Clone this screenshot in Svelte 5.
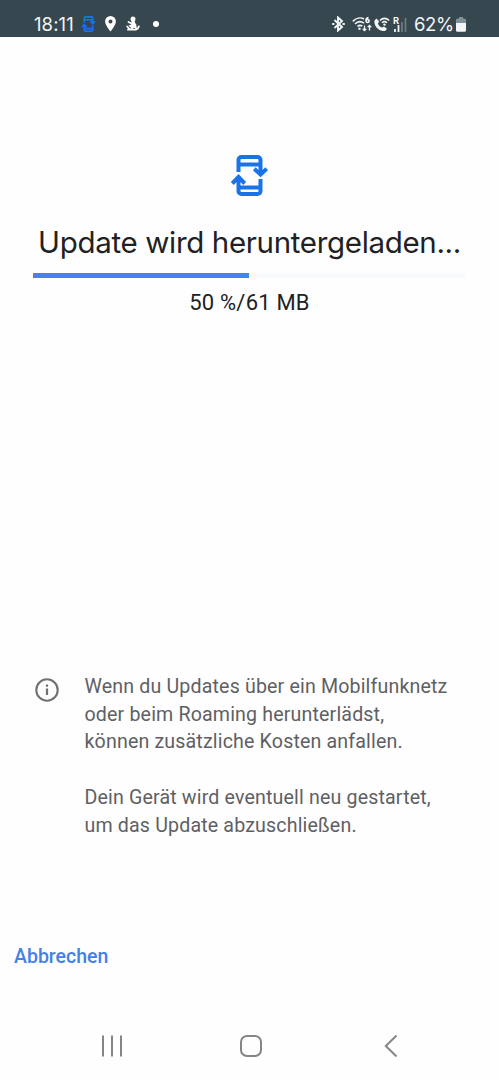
<script>
  const progress = 50;
</script>

{#snippet phoneUpdate()}
  <path d="M238.500 172V160a3 3 0 0 1 3-3h16a3 3 0 0 1 3 3v14M239 164.500h21M254.300 168.800l6.200 5.800 6.200-5.800M260.500 179v12a3 3 0 0 1-3 3h-16a3 3 0 0 1-3-3v-14M239 187.500h21M232.300 183.500l6.200-6.500 6.200 6.500" />
{/snippet}

<div class="screen">
  <header class="status">
    <div class="left">
      <span class="clock">18:11</span>
      <svg class="mini" viewBox="230 154 39 43" width="15" height="18">{@render phoneUpdate()}</svg>
      <svg class="pin" viewBox="0 0 11 16" width="11" height="16"><path fill="#fff" fill-rule="evenodd" d="M5.500 0A5.400 5.400 0 0 0 .1 5.400C.1 9 5.500 15.500 5.500 15.500S10.900 9 10.900 5.400A5.400 5.400 0 0 0 5.500 0Zm0 3.500a2 2 0 1 1 0 4 2 2 0 0 1 0-4Z" /></svg>
      <svg class="figure" viewBox="0 0 14 16" width="14" height="16">
        <circle cx="7" cy="2.900" r="2.500" fill="#fff" />
        <path d="M5.500 5 8.500 4.500l1.300 5L8.500 12 4.500 11.500 2.500 9.500l2.700-1Z" fill="#fff" />
        <path d="M2.500 6 5 7.200M1.200 10.500l2 2.300M2 13.700h7.500M9.300 8.500l.5 3.300M10 13.500c1.500-.3 2.500-1.500 2.800-3M8 10.500l-2.500 2" fill="none" stroke="#fff" stroke-width="1.800" stroke-linecap="round" />
      </svg>
      <i class="dot"></i>
    </div>
    <div class="right">
      <svg class="bt" viewBox="0 0 13 16" width="13" height="16" fill="none" stroke="#f3f6f7" stroke-width="1.900"><path d="m2.500 4 7.500 7-4 3.500v-13L10 5l-7.500 7M.2 8h2.200M10.500 8h2.300" /></svg>
      <svg class="wifi" viewBox="0 0 20 17" width="20" height="17" fill="none" stroke="#f3f6f7" stroke-width="1.600">
        <path d="M.8 5.400C4 2 8.500 1 12 3M3 8c2.500-2.500 6-3 9-.8M5.500 10.500c1.500-1.300 3.300-1.300 4.800-.3" />
        <circle cx="7.500" cy="12.700" r="1.200" fill="#f3f6f7" stroke="none" />
        <path d="M16.500 1.600c-1.700.2-2.500 1.500-2.400 3.100" /><circle cx="15.600" cy="5" r="1.500" />
        <path stroke-width="1.300" d="M12.500 9.500v5M10.700 12.800l1.800 1.800 1.800-1.800M17.500 14.500v-5M15.700 11.200l1.800-1.800 1.800 1.800" />
      </svg>
      <svg class="call" viewBox="0 0 16 15" width="16" height="15">
        <path fill="#f3f6f7" d="M.5 3.500 2.500 1.500l2.700 3-1.300 2c.8 2.200 2.200 3.500 4.300 4.100l1.800-1.200 3 2.300-1.600 2C6 15.500-.5 9.500.5 3.500Z" />
        <path d="M5.800 3.500c2.800-2.600 6.500-2.600 9.400 0M8 5.700c1.700-1.500 3.300-1.500 5 0" fill="none" stroke="#f3f6f7" stroke-width="1.500" />
        <circle cx="10.500" cy="7.600" r="1.200" fill="#f3f6f7" />
      </svg>
      <div class="signal">
        <span>R</span>
        <svg viewBox="0 0 14 15" width="14" height="15"><path d="M2 12v3M5.500 8v7" stroke="#f3f6f7" stroke-width="1.800" /><path d="M9 5v10M12.500 1v14" stroke="#718087" stroke-width="1.600" /></svg>
      </div>
      <span class="percent">62%</span>
      <svg class="battery" viewBox="0 0 10 15" width="10" height="15"><path d="M3 0h4v1.500h1.500A1.500 1.500 0 0 1 10 3v3H0V3a1.500 1.500 0 0 1 1.500-1.500H3Z" fill="#829097" /><path d="M0 6h10v7.300a1.500 1.500 0 0 1-1.500 1.500h-7A1.500 1.500 0 0 1 0 13.300Z" fill="#f3f6f7" /></svg>
    </div>
  </header>

  <main>
    <svg class="hero" viewBox="230 154 39 43" width="39" height="43">{@render phoneUpdate()}</svg>
    <h1>Update wird heruntergeladen...</h1>
    <div class="track"><div class="fill" style="width: {progress}%"></div></div>
    <p class="amount">{progress} %/61 MB</p>
  </main>

  <section class="info">
    <svg viewBox="0 0 24 24" width="24" height="24"><circle cx="12" cy="12" r="10.700" fill="none" stroke="#707174" stroke-width="2.100" /><path d="M12 10.500v6.500M12 6.600v2.200" stroke="#707174" stroke-width="2.200" /></svg>
    <div class="notes">
      <p>Wenn du Updates über ein Mobilfunknetz<br />oder beim Roaming herunterlädst,<br />können zusätzliche Kosten anfallen.</p>
      <p>Dein Gerät wird eventuell neu gestartet,<br />um das Update abzuschließen.</p>
    </div>
  </section>

  <button class="cancel">Abbrechen</button>

  <nav>
    <svg viewBox="0 0 22 22" width="22" height="22"><path d="M2 .5v21M11 .5v21M20 .5v21" /></svg>
    <svg viewBox="0 0 22 22" width="22" height="22"><rect x="1" y="1" width="20" height="20" rx="6" /></svg>
    <svg viewBox="0 0 14 22" width="14" height="22"><path d="M12.500.5 1.800 11l10.700 10.500" /></svg>
  </nav>
</div>

<style>
  :global(body) { margin: 0; background: #fefefe; }
  .screen { width: 499px; height: 1080px; display: flex; flex-direction: column; background: #fefefe; font-family: Roboto, sans-serif; overflow: hidden; }
  svg { display: block; flex: none; }
  p, h1 { margin: 0; }
  .status { flex: none; height: 37px; box-sizing: border-box; padding: 11px 33px 0 34px; background: #37474f; color: #f3f6f7; display: flex; justify-content: space-between; }
  .left, .right { display: flex; align-items: center; height: 26px; }
  .clock { width: 47px; font: 18.500px/26px Inter, sans-serif; letter-spacing: 0.100px; }
  .mini, .hero { fill: none; stroke: #1a73e8; stroke-width: 4; }
  .pin { margin-left: 9px; }
  .figure { margin-left: 10px; }
  .dot { width: 6px; height: 6px; margin-left: 13px; border-radius: 50%; background: #fff; }
  .wifi { margin-left: 7px; }
  .call { margin-left: 2px; }
  .signal { display: flex; width: 15px; margin-left: 3px; position: relative; }
  .signal span { position: absolute; left: 0; top: -1px; font-size: 9.500px; line-height: 9px; font-weight: 700; }
  .percent { width: 42px; margin-left: 6px; font: 18.500px/26px Inter, sans-serif; letter-spacing: -0.400px; }
  main { height: 637px; flex: none; display: flex; flex-direction: column; align-items: center; padding-top: 117px; box-sizing: border-box; }
  h1 { margin-top: 25px; height: 40px; color: #202124; font: 400 29.500px/40px Inter, sans-serif; letter-spacing: -0.330px; white-space: nowrap; }
  .track { width: 432px; height: 5px; margin: 11px 1px 0 0; background: #f9fafd; }
  .fill { height: 100%; background: #4285f0; }
  .amount { margin-top: 11px; color: #202124; font-size: 22px; line-height: 28px; letter-spacing: 0.200px; white-space: nowrap; }
  .info { flex: none; height: 267px; display: flex; padding: 4px 0 0 35px; box-sizing: border-box; }
  .notes { margin: -5px 0 0 25.500px; color: #5f6064; font-size: 19.600px; line-height: 27.700px; letter-spacing: 0.160px; white-space: nowrap; }
  .notes p + p { margin-top: 27.700px; }
  .cancel { align-self: flex-start; height: 32px; margin-left: 14px; padding: 0; border: 0; background: none; color: #4480e6; font: 500 19.500px/32px Roboto, sans-serif; letter-spacing: 0; }
  nav { display: grid; grid-template-columns: 139px 144px auto; padding: 62px 101px 0; }
  nav svg { fill: none; stroke: #858585; stroke-width: 2; }
</style>
